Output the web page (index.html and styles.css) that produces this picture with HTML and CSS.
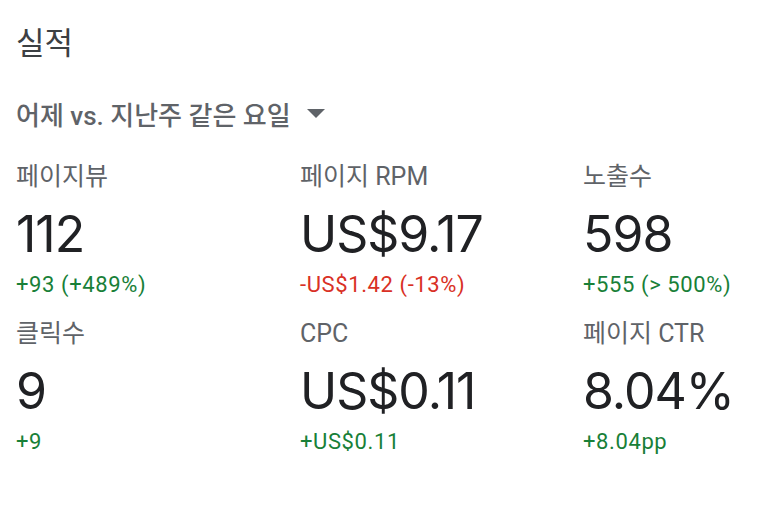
FILE: index.html
```html
<!DOCTYPE html>
<html lang="ko">
<head>
<meta charset="utf-8">
<link rel="stylesheet" href="styles.css">
</head>
<body>
<div class="card">
  <h1 class="title">실적</h1>
  <div class="range">
    <span>어제 vs. 지난주 같은 요일</span>
    <svg class="caret" width="18" height="9" viewBox="0 0 18 9"><path d="M0 0 L18 0 L9 9 Z" fill="#5f6368"/></svg>
  </div>
  <div class="grid">
    <div class="metric">
      <div class="label">페이지뷰</div>
      <div class="value">112</div>
      <div class="delta up">+93 (+489%)</div>
    </div>
    <div class="metric">
      <div class="label">페이지 RPM</div>
      <div class="value">US$9.17</div>
      <div class="delta down">-US$1.42 (-13%)</div>
    </div>
    <div class="metric">
      <div class="label">노출수</div>
      <div class="value">598</div>
      <div class="delta up">+555 (&gt; 500%)</div>
    </div>
    <div class="metric">
      <div class="label">클릭수</div>
      <div class="value">9</div>
      <div class="delta up">+9</div>
    </div>
    <div class="metric">
      <div class="label">CPC</div>
      <div class="value">US$0.11</div>
      <div class="delta up">+US$0.11</div>
    </div>
    <div class="metric">
      <div class="label">페이지 CTR</div>
      <div class="value">8.04%</div>
      <div class="delta up">+8.04pp</div>
    </div>
  </div>
</div>
</body>
</html>
```

FILE: styles.css
```css
html, body {
  margin: 0;
  padding: 0;
  background: #ffffff;
}
body {
  font-family: Roboto, "Noto Sans CJK KR", sans-serif;
  overflow: hidden;
}
.card {
  padding: 22px 0 0 16px;
}
.title {
  margin: 0;
  font-size: 31px;
  font-weight: 400;
  line-height: 44px;
  color: #3c4043;
}
.range {
  display: flex;
  align-items: center;
  gap: 16px;
  margin-top: 27px;
  height: 40px;
  font-size: 26px;
  font-weight: 500;
  color: #5f6368;
}
.caret {
  display: block;
}
.grid {
  display: grid;
  grid-template-columns: 284px 283px 1fr;
  row-gap: 20px;
  margin-top: 29px;
}
.metric {
  display: flex;
  flex-direction: column;
  white-space: nowrap;
}
.label {
  font-size: 25px;
  line-height: 30px;
  color: #5f6368;
}
.value {
  font-family: Inter, "Noto Sans CJK KR", sans-serif;
  font-size: 50px;
  line-height: 60px;
  letter-spacing: -1px;
  color: #202124;
  margin-top: 12px;
}
.delta {
  font-size: 22px;
  line-height: 28px;
  letter-spacing: 0.6px;
  margin-top: 7px;
}
.up { color: #188038; }
.down { color: #d93025; }
```
